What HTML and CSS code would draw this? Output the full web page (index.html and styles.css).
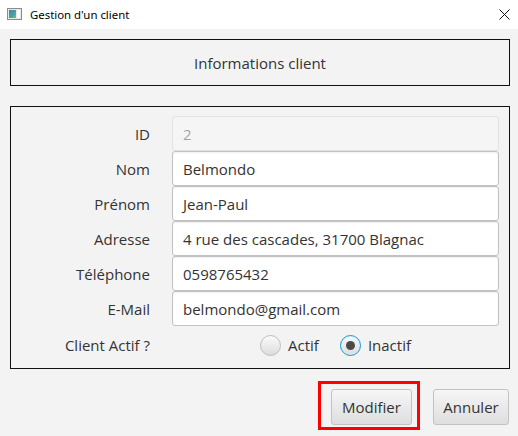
FILE: index.html
```html
<!DOCTYPE html>
<html lang="fr">
<head>
<meta charset="utf-8">
<title>Gestion d'un client</title>
<link rel="stylesheet" href="styles.css">
</head>
<body>
<div class="window">
  <div class="titlebar">
    <svg class="app-icon" width="15" height="12" viewBox="0 0 15 12">
      <defs>
        <linearGradient id="g" x1="0" y1="0" x2="1" y2="1">
          <stop offset="0" stop-color="#3d7fb8"/>
          <stop offset="0.6" stop-color="#4aa3a0"/>
          <stop offset="1" stop-color="#7cc06a"/>
        </linearGradient>
      </defs>
      <rect x="0.5" y="0.5" width="14" height="11" fill="#e8e8e8" stroke="#8c8c8c"/>
      <rect x="2" y="2" width="7" height="8" fill="url(#g)"/>
      <rect x="10" y="2" width="3" height="8" fill="#ffffff"/>
    </svg>
    <span class="title">Gestion d'un client</span>
    <svg class="close" width="11" height="11" viewBox="0 0 11 11">
      <path d="M0.5 0.5 L10.5 10.5 M10.5 0.5 L0.5 10.5" stroke="#111" stroke-width="1" fill="none"/>
    </svg>
  </div>
  <div class="content">
    <div class="header">Informations client</div>
    <div class="form">
      <label class="lbl">ID</label>
      <div class="field disabled">2</div>
      <label class="lbl">Nom</label>
      <div class="field">Belmondo</div>
      <label class="lbl">Prénom</label>
      <div class="field">Jean-Paul</div>
      <label class="lbl">Adresse</label>
      <div class="field">4 rue des cascades, 31700 Blagnac</div>
      <label class="lbl">Téléphone</label>
      <div class="field">0598765432</div>
      <label class="lbl">E-Mail</label>
      <div class="field">belmondo@gmail.com</div>
      <label class="lbl radio-lbl">Client Actif ?</label>
      <div class="radios">
        <span class="radio-item"><span class="radio"></span><span>Actif</span></span>
        <span class="radio-item"><span class="radio checked"><span class="dot"></span></span><span>Inactif</span></span>
      </div>
    </div>
    <div class="buttons">
      <button class="btn highlighted">Modifier</button>
      <button class="btn">Annuler</button>
    </div>
  </div>
</div>
</body>
</html>
```
FILE: styles.css
```css
html, body {
  margin: 0;
  padding: 0;
}
body {
  width: 518px;
  height: 436px;
  background: #f3f3f3;
  font-family: "Open Sans", "Noto Sans", sans-serif;
  overflow: hidden;
}
.window {
  width: 518px;
  height: 436px;
  display: flex;
  flex-direction: column;
}
.titlebar {
  height: 29px;
  background: #ffffff;
  display: flex;
  align-items: center;
  padding-left: 7px;
  padding-right: 8px;
}
.app-icon {
  margin-right: 8px;
  margin-top: -1px;
}
.title {
  font-family: "Noto Sans", sans-serif;
  font-size: 11.4px;
  color: #000;
  flex: 1;
  margin-top: -1px;
}
.close {
  margin-top: -1px;
}
.content {
  padding: 10px 8px 0 10px;
  display: flex;
  flex-direction: column;
}
.header {
  height: 45px;
  border: 1px solid #111;
  display: flex;
  align-items: center;
  justify-content: center;
  font-size: 15px;
  color: #333;
}
.form {
  margin-top: 20px;
  border: 1px solid #111;
  display: grid;
  grid-template-columns: 139px 327px;
  grid-auto-rows: 35px;
  column-gap: 22px;
  padding: 9px 10px 7px 0;
}
.lbl {
  display: flex;
  align-items: center;
  justify-content: flex-end;
  font-size: 15px;
  color: #333;
}
.field {
  box-sizing: border-box;
  height: 35px;
  background: #ffffff;
  border: 1px solid #c2c2c2;
  border-radius: 3px;
  box-shadow: inset 0 1px 2px rgba(0,0,0,0.06);
  display: flex;
  align-items: center;
  padding-left: 10px;
  font-size: 15px;
  color: #333;
}
.field.disabled {
  background: #f5f5f5;
  border-color: #e2e2e2;
  color: #a5a5a5;
  box-shadow: none;
}
.form .radio-lbl {
  height: 38px;
}
.radios {
  height: 38px;
  display: flex;
  align-items: center;
  justify-content: center;
  gap: 21px;
  font-size: 15px;
  color: #333;
}
.radio-item {
  display: flex;
  align-items: center;
  gap: 7px;
}
.radio {
  box-sizing: border-box;
  width: 21px;
  height: 21px;
  border-radius: 50%;
  border: 1px solid #bdbdbd;
  background: linear-gradient(#fafafa, #dcdcdc);
  display: flex;
  align-items: center;
  justify-content: center;
}
.radio.checked {
  border: 1.5px solid #0d9bd6;
  box-shadow: inset 0 0 0 1px #d8eef8;
}
.dot {
  width: 9px;
  height: 9px;
  border-radius: 50%;
  background: #4a4a4a;
}
.buttons {
  display: flex;
  justify-content: flex-end;
  gap: 21px;
  margin-top: 20px;
  padding-right: 1px;
}
.btn {
  box-sizing: border-box;
  height: 36px;
  padding: 0 8px;
  border: 1px solid #c2c2c2;
  border-radius: 3px;
  background: linear-gradient(#f6f6f6, #dedede);
  font-family: "Open Sans", "Noto Sans", sans-serif;
  font-size: 15px;
  color: #333;
}
.btn.highlighted {
  width: 81px;
  position: relative;
}
.btn.highlighted::after {
  content: "";
  position: absolute;
  left: -14px;
  top: -9px;
  right: -9px;
  bottom: -6px;
  border: 3px solid #ff0000;
}
.btn:not(.highlighted) {
  width: 76px;
}
```
